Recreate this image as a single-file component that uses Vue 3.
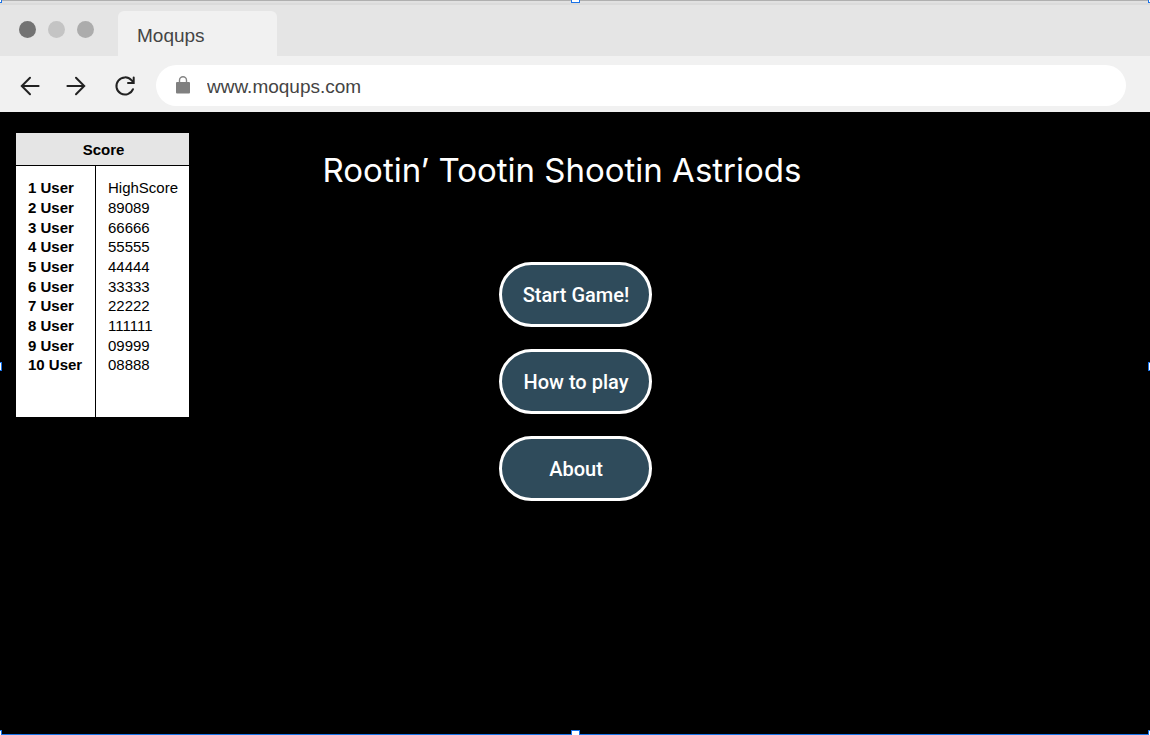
<script setup>
const scores = [
  'HighScore', '89089', '66666', '55555', '44444',
  '33333', '22222', '111111', '09999', '08888',
]
const actions = ['Start Game!', 'How to play', 'About']
const handles = ['nw', 'n', 'ne', 'e', 'se', 's', 'sw', 'w']
</script>

<template>
  <div class="window">
    <header>
      <div class="tabs">
        <div class="dots">
          <span class="dot dark"></span>
          <span class="dot light"></span>
          <span class="dot mid"></span>
        </div>
        <div class="tab">Moqups</div>
      </div>
      <div class="toolbar">
        <button class="nav" aria-label="Back">
          <svg width="20" height="20" viewBox="0 0 20 20"><path d="M18.6 10H2M10 1.8L1.8 10L10 18.2" /></svg>
        </button>
        <button class="nav" aria-label="Forward">
          <svg width="20" height="20" viewBox="0 0 20 20"><path d="M1.4 10H18M10 1.8L18.2 10L10 18.2" /></svg>
        </button>
        <button class="nav reload" aria-label="Reload">
          <svg width="20" height="20" viewBox="0 0 20 20"><path d="M18 13.2A8.6 8.6 0 1 1 16.4 4.2L18.4 6.4M18.7 1.4V7H13" /></svg>
        </button>
        <div class="address">
          <svg class="lock" width="14" height="18" viewBox="0 0 14 18">
            <path d="M3.5 7V4.2a3.5 3.5 0 0 1 7 0V7" fill="none" stroke="#858585" stroke-width="1.4" />
            <rect y="6" width="14" height="11.5" rx="1" fill="#808080" />
          </svg>
          <input type="text" value="www.moqups.com" aria-label="Address" />
        </div>
      </div>
    </header>

    <div class="page">
      <table>
        <thead>
          <tr><th colspan="2" scope="colgroup">Score</th></tr>
        </thead>
        <tbody>
          <tr v-for="(score, i) in scores" :key="i">
            <th scope="row">{{ i + 1 }} User</th>
            <td>{{ score }}</td>
          </tr>
        </tbody>
      </table>
      <main>
        <h1>Rootin’ Tootin Shootin Astriods</h1>
        <div class="actions">
          <button v-for="label in actions" :key="label">{{ label }}</button>
        </div>
      </main>
    </div>

    <div class="selection">
      <span v-for="h in handles" :key="h" :class="['handle', h]"></span>
    </div>
  </div>
</template>

<style>
body {
  margin: 0;
  background: #000;
}
</style>

<style scoped>
.window {
  position: relative;
  display: flex;
  flex-direction: column;
  min-height: 100vh;
  overflow: hidden;
  background: #000;
  font-family: "Liberation Sans", Arial, sans-serif;
}
.tabs {
  display: flex;
  align-items: flex-end;
  height: 56px;
  box-sizing: border-box;
  background: linear-gradient(#b0b0b0 1px, #e1e1e1 1px 3px, #dbdbdb 3px 5px, #e5e5e5 5px);
}
.dots {
  display: flex;
  gap: 12px;
  width: 99px;
  padding: 0 0 18px 19px;
}
.dot {
  width: 17px;
  height: 17px;
  border-radius: 50%;
}
.dark { background: #737373; }
.light { background: #c4c4c4; }
.mid { background: #acacac; }
.tab {
  width: 140px;
  padding: 4px 0 0 19px;
  border-radius: 6px 6px 0 0;
  background: #f1f1f1;
  color: #444;
  font-size: 19px;
  line-height: 41px;
}
.toolbar {
  display: flex;
  align-items: center;
  height: 56px;
  padding: 0 24px 0 20px;
  background: #f1f1f1;
}
.nav {
  display: flex;
  margin: 4px 26px 0 0;
  padding: 0;
  border: 0;
  background: none;
}
.nav svg {
  overflow: visible;
  fill: none;
  stroke: #222;
  stroke-width: 2;
  stroke-linecap: round;
}
.reload {
  margin: 4px 21px 0 3px;
}
.address {
  display: flex;
  flex: 1;
  align-items: center;
  gap: 17px;
  height: 41px;
  margin-top: 2px;
  padding-left: 20px;
  border-radius: 21px;
  background: #fff;
}
.address input {
  flex: 1;
  padding: 4px 0 0;
  border: 0;
  outline: 0;
  background: none;
  color: #444;
  font: 19px "Liberation Sans", Arial, sans-serif;
}
.page {
  display: grid;
  grid-template-columns: 173px 1fr 173px;
  align-items: start;
  padding: 21px 16px;
}
table {
  border-collapse: collapse;
  background: #fff;
  color: #000;
  font-size: 15px;
  line-height: 20px;
}
thead th {
  height: 30px;
  padding: 2px 0 0 2px;
  border-bottom: 1px solid #000;
  background: #e5e5e5;
}
tbody th {
  width: 67px;
  padding: 0 0 0 12px;
  border-right: 1px solid #000;
  text-align: left;
}
tbody td {
  padding: 0 0 0 12px;
}
tbody tr:nth-child(3n) {
  line-height: 19px;
}
tbody tr:first-child > * {
  padding-top: 12px;
}
tbody tr:last-child > * {
  padding-bottom: 42px;
}
main {
  display: flex;
  flex-direction: column;
  align-items: center;
}
h1 {
  margin: 16px 0 70px;
  padding-right: 26px;
  color: #fff;
  font: 400 33px/43px Inter, sans-serif;
}
.actions {
  display: flex;
  flex-direction: column;
  gap: 22px;
}
.actions button {
  width: 153px;
  height: 65px;
  padding: 0 0 0 2px;
  border: 3px solid #fff;
  border-radius: 33px;
  background: #2f4b5b;
  color: #fff;
  font: 500 20px Roboto, sans-serif;
}
.selection {
  position: absolute;
  inset: 0;
  border-bottom: 1px solid #1a73e8;
  pointer-events: none;
}
.handle {
  position: absolute;
  width: 7px;
  height: 7px;
  border: 1px solid #1a73e8;
  background: #fff;
}
.n, .s { left: calc(50% - 4px); }
.e, .w { top: calc(50% - 5px); }
.n, .nw, .ne { top: -6px; }
.s, .sw, .se { bottom: -5px; }
.w, .nw, .sw { left: -7px; }
.e, .ne, .se { right: -7px; }
</style>
